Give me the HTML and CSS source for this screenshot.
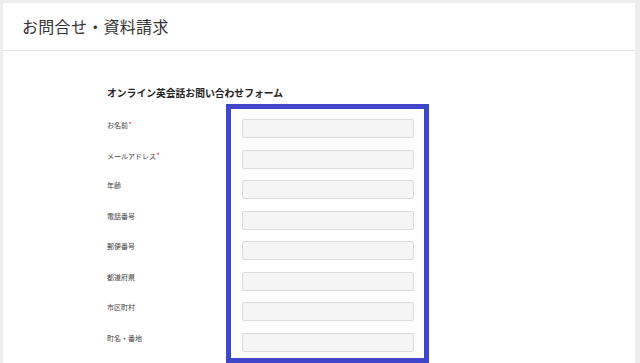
FILE: index.html
```html
<!DOCTYPE html>
<html lang="ja">
<head>
<meta charset="utf-8">
<link rel="stylesheet" href="styles.css">
</head>
<body>
<div class="panel">
  <header class="head"><h1 class="title">お問合せ・資料請求</h1></header>
  <main class="content">
    <h2 class="form-title">オンライン英会話お問い合わせフォーム</h2>
    <div class="form">
      <div class="labels">
        <div class="label">お名前<span class="req">*</span></div>
        <div class="label">メールアドレス<span class="req">*</span></div>
        <div class="label">年齢</div>
        <div class="label">電話番号</div>
        <div class="label">郵便番号</div>
        <div class="label">都道府県</div>
        <div class="label">市区町村</div>
        <div class="label">町名・番地</div>
      </div>
      <div class="frame">
        <div class="input"></div>
        <div class="input"></div>
        <div class="input"></div>
        <div class="input"></div>
        <div class="input"></div>
        <div class="input"></div>
        <div class="input"></div>
        <div class="input"></div>
      </div>
    </div>
  </main>
</div>
</body>
</html>
```
FILE: styles.css
```css
html, body {
  margin: 0;
  padding: 0;
  height: 363px;
  overflow: hidden;
}
body {
  background: #ededed;
  padding: 3px 5px 0 3px;
  box-sizing: border-box;
  font-family: "Noto Sans CJK JP", "Noto Sans", sans-serif;
  color: #333;
}
.panel {
  background: #fff;
  height: 100%;
}
.head {
  height: 48px;
  box-sizing: border-box;
  padding: 13px 19px 0;
  border-bottom: 1px solid #e4e4e4;
}
.title {
  margin: 0;
  font-size: 16px;
  line-height: 20px;
  font-weight: normal;
  color: #333;
  letter-spacing: 0.3px;
}
.content {
  padding: 36px 0 0 104px;
}
.form-title {
  margin: 0 0 5px;
  font-size: 9.8px;
  line-height: 12px;
  font-weight: bold;
  color: #222;
}
.form {
  display: flex;
}
.labels {
  width: 119px;
  padding-top: 15px;
}
.label {
  height: 30.5px;
  font-size: 7px;
  line-height: 10px;
  color: #444;
}
.req {
  color: #e02020;
  font-size: 7px;
  vertical-align: 1px;
  margin-left: 0.5px;
}
.frame {
  width: 203px;
  box-sizing: border-box;
  border: 5px solid #4046c9;
  padding: 10px 10px 3px 11px;
  display: flex;
  flex-direction: column;
  gap: 11.5px;
}
.input {
  height: 19px;
  box-sizing: border-box;
  background: #f5f5f5;
  border: 1px solid #dcdcdc;
  border-radius: 2px;
}
```
